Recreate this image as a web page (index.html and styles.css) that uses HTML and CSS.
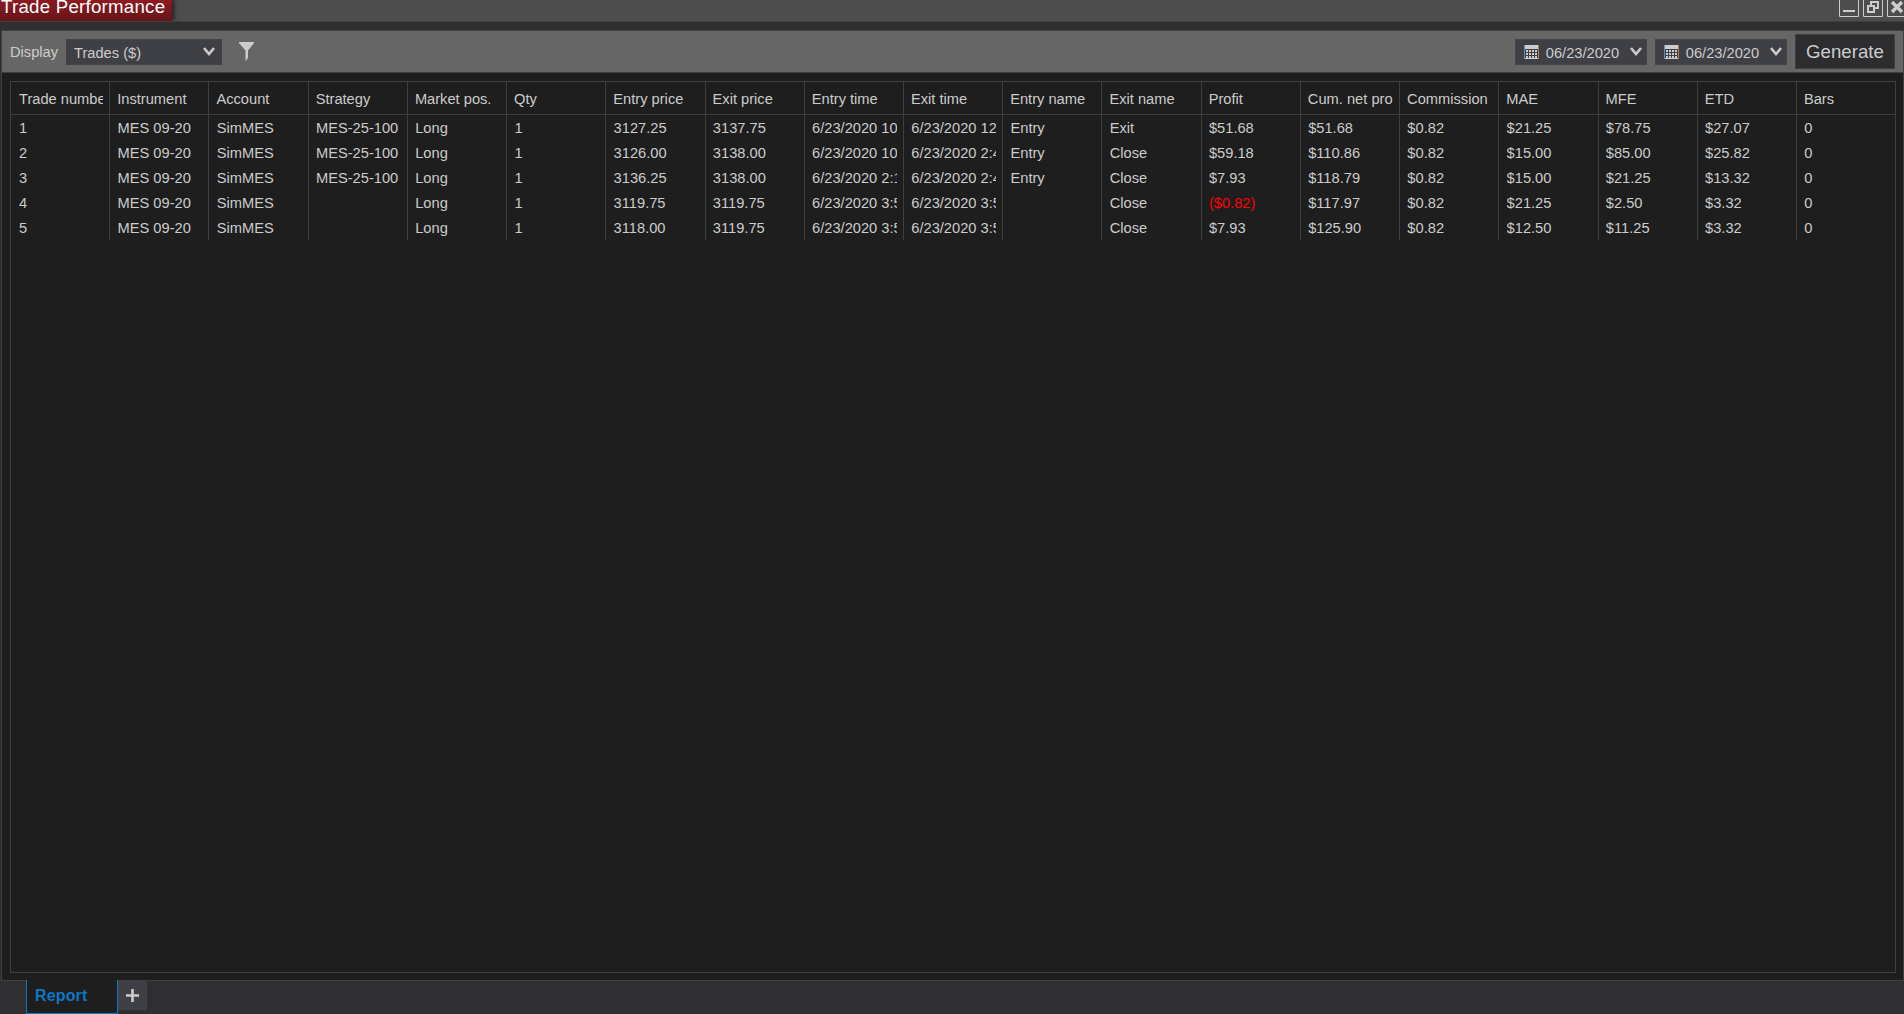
FILE: index.html
```html
<!DOCTYPE html>
<html lang="en">
<head>
    <meta charset="UTF-8">
    <title>Trade Performance</title>
    <link rel="stylesheet" href="styles.css">
</head>
<body>
    <div class="title-bar">
        <div class="title">Trade Performance</div>
        <div class="window-buttons">
            <svg width="20" height="17" viewBox="0 0 20 17">
                <path class="frame" d="M0.5 0V16.5H19.5V0"></path>
                <path class="fill" d="M4 10h12v2H4z"></path>
            </svg>
            <svg width="20" height="17" viewBox="0 0 20 17">
                <path class="frame" d="M0.5 0V16.5H19.5V0"></path>
                <path class="thick" d="M8 7V2H15V8H12M5 6H11V12H5Z"></path>
            </svg>
            <svg width="20" height="17" viewBox="0 0 20 17">
                <path class="frame" d="M0.5 0V16.5H19.5V0"></path>
                <path class="cross" d="M5 2L15 12M15 2L5 12"></path>
            </svg>
        </div>
    </div>

    <div class="panel">
        <div class="toolbar">
            <span class="label">Display</span>
            <div class="select">
                <span>Trades ($)</span>
                <svg class="chevron" width="12" height="9" viewBox="0 0 12 9"><path d="M1 1L6 7L11 1"></path></svg>
            </div>
            <svg class="funnel" width="15" height="19" viewBox="0 0 15 19"><path d="M0 0H15V1L9 8.5V16L6.5 19V8.5L0 1Z"></path></svg>

            <div class="date date-from">
                <svg class="calendar" width="15" height="15" viewBox="0 0 15 15">
                    <path class="fill" d="M0 0h15v4H0zM1 13h13v1H1z"></path>
                    <path class="dots" d="M2 6h12M2 9h12M2 12h12"></path>
                    <path class="left" d="M0.5 0v14"></path>
                    <path class="right" d="M14.5 0v14"></path>
                </svg>
                <span>06/23/2020</span>
                <svg class="chevron" width="12" height="9" viewBox="0 0 12 9"><path d="M1 1L6 7L11 1"></path></svg>
            </div>
            <div class="date">
                <svg class="calendar" width="15" height="15" viewBox="0 0 15 15">
                    <path class="fill" d="M0 0h15v4H0zM1 13h13v1H1z"></path>
                    <path class="dots" d="M2 6h12M2 9h12M2 12h12"></path>
                    <path class="left" d="M0.5 0v14"></path>
                    <path class="right" d="M14.5 0v14"></path>
                </svg>
                <span>06/23/2020</span>
                <svg class="chevron" width="12" height="9" viewBox="0 0 12 9"><path d="M1 1L6 7L11 1"></path></svg>
            </div>
            <button class="generate">Generate</button>
        </div>

        <div class="grid" id="grid"></div>
    </div>

    <div class="tabs">
        <div class="tab">Report</div>
        <div class="add-tab">
            <svg width="13" height="13" viewBox="0 0 13 13"><path d="M6.5 0V13M0 6.5H13"></path></svg>
        </div>
    </div>

    <script src="script.js"></script>
</body>
</html>
```
FILE: styles.css
```css
* {
    box-sizing: border-box;
    margin: 0;
    padding: 0;
}

body {
    width: 100%;
    height: 100vh;
    display: flex;
    flex-direction: column;
    background-color: #2f2f31;
    color: #cccccc;
    font-family: "Liberation Sans", Arial, sans-serif;
    font-size: 14.67px;
    overflow: hidden;
}

svg {
    display: block;
    flex: none;
    fill: none;
}

/* Title bar */
.title-bar {
    height: 22px;
    flex: none;
    display: flex;
    justify-content: space-between;
    background-color: #4d4d4d;
    border-bottom: 1px solid #3f3f42;
    overflow: hidden;
}

.title {
    width: 172px;
    height: 21px;
    padding-left: 1px;
    background: linear-gradient(#8e1a20, #64151a);
    box-shadow: 2px 0 4px rgba(0, 0, 0, 0.6);
    color: #ffffff;
    font-size: 18.67px;
    letter-spacing: 0.25px;
    line-height: 14px;
    white-space: nowrap;
}

.window-buttons {
    display: flex;
    gap: 4px;
    margin-right: -3px;
}

.window-buttons .frame {
    stroke: #cccccc;
}

.window-buttons .fill,
.calendar .fill {
    fill: #cccccc;
}

.window-buttons .thick {
    stroke: #cccccc;
    stroke-width: 2;
}

.window-buttons .cross {
    stroke: #cccccc;
    stroke-width: 3.4;
}

/* Main panel */
.panel {
    flex: 1;
    display: flex;
    flex-direction: column;
    margin: 8px 0 0 1px;
    background-color: #1e1e1e;
    border: 1px solid #3f3f42;
}

.toolbar {
    height: 42px;
    flex: none;
    display: flex;
    align-items: center;
    padding: 0 8px;
    background-color: #666666;
    border-bottom: 1px solid #3f3f42;
}

.label {
    width: 56px;
}

.select,
.date {
    height: 26px;
    display: flex;
    align-items: center;
    justify-content: space-between;
    background-color: #3f3f46;
    border: 1px solid #434348;
    padding: 1px 6px 0 7px;
}

.select span,
.date span {
    padding-top: 2px;
}

.select {
    width: 156px;
}

.chevron {
    stroke: #cccccc;
    stroke-width: 2.6;
    margin-top: -2px;
}

.funnel {
    margin-left: 17px;
    margin-top: -1px;
    fill: #cccccc;
}

.date {
    width: 132px;
    margin-right: 8px;
    padding: 1px 4px 0 8px;
}

.date-from {
    margin-left: auto;
}

.date span {
    margin-right: 4px;
}

.calendar .dots {
    stroke: #cccccc;
    stroke-width: 2;
    stroke-dasharray: 2 1;
}

.calendar .left {
    stroke: #5a8fc0;
}

.calendar .right {
    stroke: #b07a4a;
}

.generate {
    width: 100px;
    height: 35px;
    background-color: #2d2d30;
    border: 1px solid #3f3f42;
    color: #cccccc;
    font-family: inherit;
    font-size: 18.67px;
}

/* Trades grid */
.grid {
    flex: 1;
    margin: 8px 7px 7px 8px;
    border: 1px solid #3f3f42;
    overflow: hidden;
}

.row {
    display: grid;
    grid-template-columns: repeat(19, 99.22px);
    grid-template-rows: 100%;
    height: 25px;
    line-height: 26px;
}

.row.header {
    height: 33px;
    line-height: 34px;
    border-bottom: 1px solid #3f3f42;
}

.cell {
    padding: 0 6px 0 7.3px;
    border-right: 1px solid #3f3f42;
}

.header .cell {
    padding-left: 7px;
}

.cell:first-child {
    padding-left: 8px;
}

.cell:last-child {
    border-right: none;
}

.cell span {
    display: block;
    height: 100%;
    overflow: hidden;
    white-space: nowrap;
}

.negative {
    color: #ff0000;
}

/* Bottom tabs */
.tabs {
    height: 34px;
    flex: none;
    display: flex;
    padding-left: 26px;
    margin-top: -1px;
}

.tab {
    width: 92px;
    height: 34px;
    padding-left: 8px;
    background-color: #1e1e1e;
    border: 1px solid #0d77c5;
    border-top: none;
    color: #0d77c5;
    font-size: 16px;
    letter-spacing: 0.15px;
    font-weight: bold;
    line-height: 31px;
}

.add-tab {
    width: 29px;
    height: 29px;
    margin-top: 1px;
    display: flex;
    align-items: center;
    justify-content: center;
    background-color: #3f3f46;
}

.add-tab path {
    stroke: #cccccc;
    stroke-width: 2.6;
}
```
FILE: script.js
```js
const columns = ["Trade number", "Instrument", "Account", "Strategy", "Market pos.", "Qty", "Entry price", "Exit price", "Entry time", "Exit time", "Entry name", "Exit name", "Profit", "Cum. net pro", "Commission", "MAE", "MFE", "ETD", "Bars"];

const trades = [
    ["1", "MES 09-20", "SimMES", "MES-25-100", "Long", "1", "3127.25", "3137.75", "6/23/2020 10", "6/23/2020 12", "Entry", "Exit", "$51.68", "$51.68", "$0.82", "$21.25", "$78.75", "$27.07", "0"],
    ["2", "MES 09-20", "SimMES", "MES-25-100", "Long", "1", "3126.00", "3138.00", "6/23/2020 10", "6/23/2020 2:4", "Entry", "Close", "$59.18", "$110.86", "$0.82", "$15.00", "$85.00", "$25.82", "0"],
    ["3", "MES 09-20", "SimMES", "MES-25-100", "Long", "1", "3136.25", "3138.00", "6/23/2020 2:1", "6/23/2020 2:4", "Entry", "Close", "$7.93", "$118.79", "$0.82", "$15.00", "$21.25", "$13.32", "0"],
    ["4", "MES 09-20", "SimMES", "", "Long", "1", "3119.75", "3119.75", "6/23/2020 3:5", "6/23/2020 3:5", "", "Close", "($0.82)", "$117.97", "$0.82", "$21.25", "$2.50", "$3.32", "0"],
    ["5", "MES 09-20", "SimMES", "", "Long", "1", "3118.00", "3119.75", "6/23/2020 3:5", "6/23/2020 3:5", "", "Close", "$7.93", "$125.90", "$0.82", "$12.50", "$11.25", "$3.32", "0"]
];

const grid = document.getElementById("grid");

function addRow(values, className) {
    const row = document.createElement("div");
    row.className = className;
    values.forEach(function (value) {
        const cell = document.createElement("div");
        const text = document.createElement("span");
        cell.className = "cell";
        text.textContent = value;
        // losses are shown in parentheses
        if (value.startsWith("(")) {
            text.className = "negative";
        }
        cell.appendChild(text);
        row.appendChild(cell);
    });
    grid.appendChild(row);
}

addRow(columns, "row header");
trades.forEach(trade => addRow(trade, "row"));
```
